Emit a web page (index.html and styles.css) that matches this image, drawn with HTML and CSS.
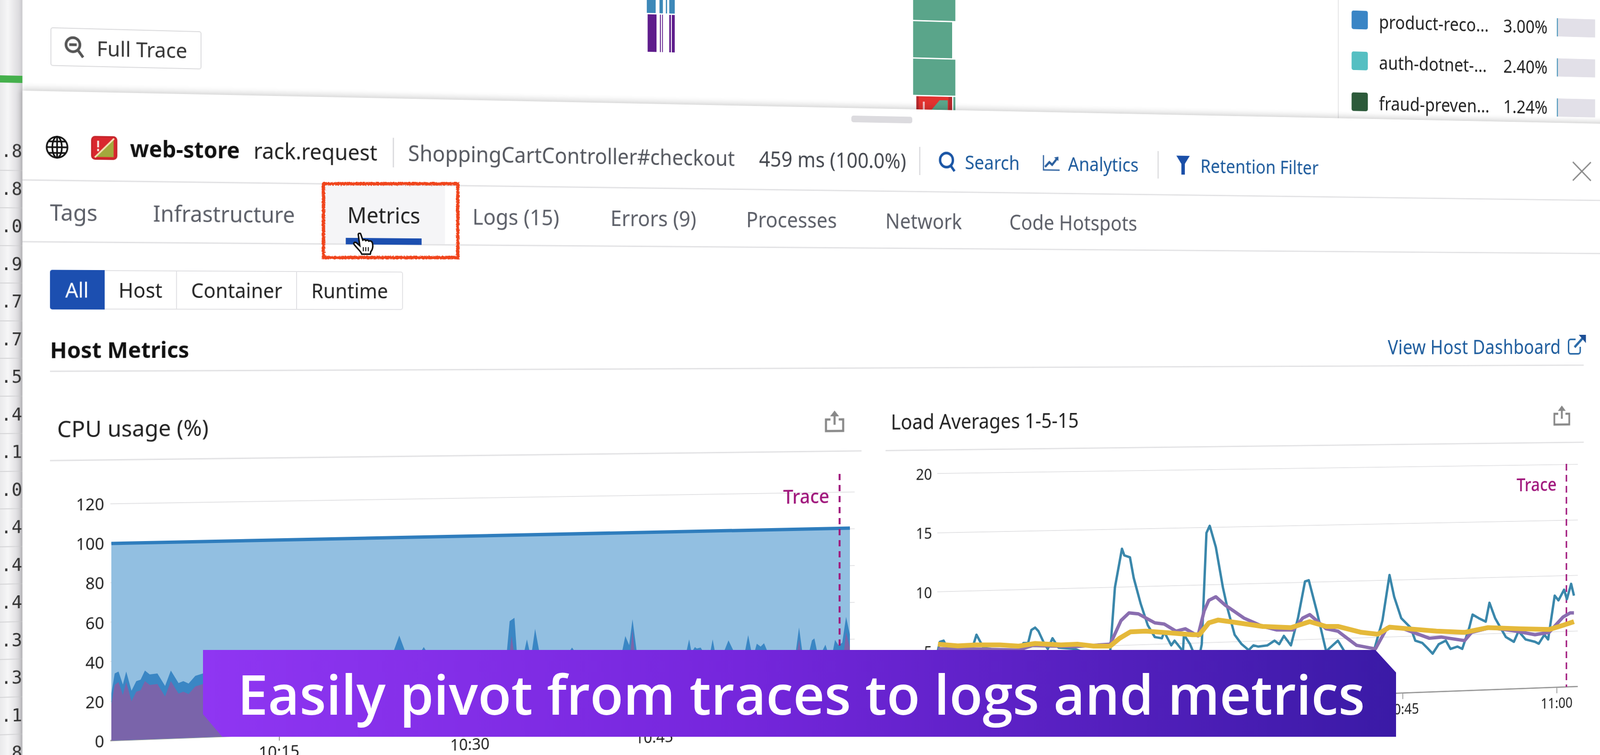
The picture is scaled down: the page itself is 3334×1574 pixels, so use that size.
FILE: index.html

```html
<!DOCTYPE html>
<html lang="en">
<head>
  <meta charset="UTF-8">
  <title>Trace panel - Metrics</title>
  <link rel="stylesheet" href="styles.css">
</head>
<body>
  <main class="stage">
    <aside class="gutter">
      <div class="gutter-bar"></div>
      <div class="gutter-row">.8</div>
      <div class="gutter-row">.8</div>
      <div class="gutter-row">.0</div>
      <div class="gutter-row">.9</div>
      <div class="gutter-row">.7</div>
      <div class="gutter-row">.7</div>
      <div class="gutter-row">.5</div>
      <div class="gutter-row">.4</div>
      <div class="gutter-row">.1</div>
      <div class="gutter-row">.0</div>
      <div class="gutter-row">.4</div>
      <div class="gutter-row">.4</div>
      <div class="gutter-row">.4</div>
      <div class="gutter-row">.3</div>
      <div class="gutter-row">.3</div>
      <div class="gutter-row">.1</div>
      <div class="gutter-row">.8</div>
    </aside>

    <div class="main">
      <section class="trace">
        <button class="full-trace">
          <svg class="icon-zoom" viewBox="0 0 40 44"><circle cx="17" cy="17" r="13" fill="none" stroke="#555" stroke-width="5"/><path d="M10 17h14M27 28l9 12" stroke="#555" stroke-width="5" fill="none"/></svg>
          Full Trace
        </button>
        <svg class="flame" viewBox="0 0 70 193">
          <g fill="#3d88b8"><rect x="0" width="21" height="107"/><rect x="30" width="8" height="107"/><rect x="53" width="13" height="107"/><rect x="45" width="3" height="107"/></g>
          <g fill="#5f1d8c"><rect x="2" y="110" width="21" height="83"/><rect x="31" y="110" width="2" height="83"/><rect x="36" y="110" width="2" height="83"/><rect x="53" y="110" width="4" height="83"/><rect x="59" y="110" width="7" height="83"/></g>
        </svg>
        <div class="green-stack">
          <div class="green-block green-a"></div>
          <div class="green-block green-b"></div>
          <div class="green-block green-c"></div>
          <div class="red-row">
            <svg class="red-block" viewBox="0 0 89 30"><rect width="89" height="30" fill="#e2322f"/><rect x="16" y="12" width="5" height="18" fill="#f3b9bd"/><path d="M38 30 58 8h20v22z" fill="#5aa58a"/><path d="M0 0h6v30H0zM80 0h9v30h-9z" fill="#b5282c"/></svg>
            <div class="red-strip"></div>
          </div>
        </div>
        <div class="services">
          <div class="service">
            <span class="swatch swatch-blue"></span>
            <span class="service-name">product-reco...</span>
            <span class="service-pct">3.00%</span>
            <span class="service-bar"></span>
          </div>
          <div class="service">
            <span class="swatch swatch-teal"></span>
            <span class="service-name">auth-dotnet-...</span>
            <span class="service-pct">2.40%</span>
            <span class="service-bar"></span>
          </div>
          <div class="service">
            <span class="swatch swatch-green"></span>
            <span class="service-name">fraud-preven...</span>
            <span class="service-pct">1.24%</span>
            <span class="service-bar"></span>
          </div>
        </div>
      </section>

      <section class="panel">
        <div class="handle"></div>

        <header class="span-header">
          <svg class="icon-globe" viewBox="0 0 52 50" fill="none" stroke="#111" stroke-width="3.5"><circle cx="26" cy="25" r="22"/><ellipse cx="26" cy="25" rx="10" ry="22"/><path d="M26 3v44M4 25h44M8 13h36M8 37h36"/></svg>
          <svg class="icon-service" viewBox="0 0 56 50"><rect x="1.5" y="1.5" width="53" height="47" rx="7" fill="#d9272e" stroke="#c4242a" stroke-width="3"/><path d="M48 6v38H9z" fill="#a3a83c"/><path d="M49 5 8 45" stroke="#f3e2b4" stroke-width="3.5"/><path d="M13 10h4v14h-4zM13 27h4v5h-4z" fill="#f8e6e0"/></svg>
          <strong class="service-title">web-store</strong>
          <span class="operation">rack.request</span>
          <span class="divider divider-a"></span>
          <span class="resource">ShoppingCartController#checkout</span>
          <span class="duration">459 ms (100.0%)</span>
          <span class="divider divider-b"></span>
          <svg class="icon-search" viewBox="0 0 46 48" fill="none" stroke="#1a55a5" stroke-width="6"><circle cx="21" cy="21" r="16"/><path d="M31 33l10 13"/></svg>
          <a class="link link-search">Search</a>
          <svg class="icon-analytics" viewBox="0 0 44 38" fill="none" stroke="#2a5f9e"><path d="M2 1v34h41" stroke-width="3"/><path d="M6 28l11-11 7 6 12-14" stroke-width="5"/><path d="M29 6l11-2v10z" fill="#2a5f9e" stroke="none"/></svg>
          <a class="link link-analytics">Analytics</a>
          <span class="divider divider-c"></span>
          <svg class="icon-filter" viewBox="0 0 35 44"><path d="M0 0h35L22 19v25h-9V19z" fill="#1a4fa8"/></svg>
          <a class="link link-retention">Retention Filter</a>
          <svg class="icon-close" viewBox="0 0 55 49" fill="none" stroke="#8b8b8b" stroke-width="3.5"><path d="M2 2l51 45M53 2 2 47"/></svg>
        </header>

        <nav class="tabs">
          <a class="tab">Tags</a>
          <a class="tab tab-infra">Infrastructure</a>
          <a class="tab tab-active"><span class="tab-label">Metrics</span><i class="tab-bar"></i></a>
          <a class="tab">Logs (15)</a>
          <a class="tab">Errors (9)</a>
          <a class="tab">Processes</a>
          <a class="tab">Network</a>
          <a class="tab">Code Hotspots</a>
        </nav>

        <div class="panel-body">
          <div class="filter">
            <button class="filter-btn filter-all">All</button>
            <button class="filter-btn filter-host">Host</button>
            <button class="filter-btn filter-container">Container</button>
            <button class="filter-btn filter-runtime">Runtime</button>
          </div>

          <div class="section-head">
            <h2>Host Metrics</h2>
            <a class="dashboard-link">View Host Dashboard
              <svg class="icon-external" viewBox="0 0 52 50" fill="none" stroke="#2a6aa8" stroke-width="4"><path d="M36 30v11a6 6 0 0 1-6 6H9a6 6 0 0 1-6-6V18a6 6 0 0 1 6-6h14"/><path d="M20 31 44 8" stroke-width="6"/><path d="M32 1h20v20z" fill="#1d4f96" stroke="none"/></svg>
            </a>
          </div>

          <div class="charts">
            <article class="chart chart-cpu">
              <div class="chart-title">
                <h3>CPU usage (%)</h3>
                <svg class="icon-share" viewBox="0 0 48 49" fill="none" stroke="#888" stroke-width="5"><path d="M14 20H3v26h42V20H34"/><path d="M24 32V6"/><path d="M24 0l11 13H13z" fill="#888" stroke="none"/></svg>
              </div>
              <div class="trace-label">Trace</div>
              <div class="y-rows">
                <div class="y-row"><span class="y-label">120</span><i class="grid-line"></i></div>
                <div class="y-row"><span class="y-label">100</span><i class="grid-line"></i></div>
                <div class="y-row"><span class="y-label">80</span><i class="grid-line"></i></div>
                <div class="y-row"><span class="y-label">60</span><i class="grid-line"></i></div>
                <div class="y-row"><span class="y-label">40</span><i class="grid-line"></i></div>
                <div class="y-row"><span class="y-label">20</span><i class="grid-line"></i></div>
                <div class="y-row"><span class="y-label">0</span><i class="grid-line grid-axis"></i></div>
              </div>
              <div class="x-axis">
                <span class="x-tick">10:15</span>
                <span class="x-tick">10:30</span>
                <span class="x-tick">10:45</span>
              </div>
            </article>

            <article class="chart chart-load">
              <div class="chart-title">
                <h3>Load Averages 1-5-15</h3>
                <svg class="icon-share" viewBox="0 0 48 49" fill="none" stroke="#888" stroke-width="5"><path d="M14 20H3v26h42V20H34"/><path d="M24 32V6"/><path d="M24 0l11 13H13z" fill="#888" stroke="none"/></svg>
              </div>
              <div class="trace-label">Trace</div>
              <div class="y-rows">
                <div class="y-row"><span class="y-label">20</span><i class="grid-line"></i></div>
                <div class="y-row"><span class="y-label">15</span><i class="grid-line"></i></div>
                <div class="y-row"><span class="y-label">10</span><i class="grid-line"></i></div>
                <div class="y-row"><span class="y-label">5</span><i class="grid-line"></i></div>
                <div class="y-row"><span class="y-label"></span><i class="grid-line grid-axis"></i></div>
              </div>
              <div class="x-axis">
                <span class="x-tick">10:15</span>
                <span class="x-tick">10:30</span>
                <span class="x-tick">10:45</span>
                <span class="x-tick">11:00</span>
              </div>
            </article>
          </div>
        </div>
      </section>
    </div>
  </main>

  <!-- series are drawn over the tilted page, in screen pixels -->
  <svg class="series" viewBox="0 0 3334 1574">
    <polygon fill="#92bfe1" points="232,1133 1771,1101 1771,1487 232,1544"/>
    <polygon fill="#3a86c4" points="232,1446 239,1404 247,1400 256,1427 263,1400 274,1440 284,1420 293,1417 302,1398 312,1406 328,1404 344,1430 356,1398 372,1424 382,1420 393,1425 407,1409 423,1404 800,1360 820,1358 832,1325 845,1360 876,1360 883,1349 890,1360 1056,1360 1062,1295 1072,1288 1077,1360 1092,1360 1098,1333 1104,1360 1108,1360 1115,1311 1124,1360 1185,1360 1192,1350 1199,1360 1296,1360 1303,1326 1311,1345 1318,1291 1327,1360 1430,1360 1436,1333 1441,1360 1448,1349 1452,1352 1460,1350 1466,1360 1480,1360 1485,1333 1490,1360 1508,1360 1518,1335 1530,1360 1552,1360 1559,1324 1566,1360 1572,1360 1577,1342 1585,1348 1592,1341 1600,1360 1658,1360 1665,1308 1672,1360 1686,1360 1692,1335 1697,1331 1703,1360 1712,1360 1720,1344 1725,1360 1735,1360 1740,1334 1747,1345 1755,1340 1763,1286 1771,1323 1771,1487 232,1544"/>
    <polygon fill="#7a64aa" points="232,1468 239,1428 247,1422 256,1449 263,1422 274,1462 284,1442 293,1439 302,1420 312,1428 328,1426 344,1452 356,1420 372,1446 382,1442 393,1447 407,1431 423,1426 800,1380 1060,1380 1066,1326 1074,1380 1312,1380 1318,1313 1324,1380 1658,1380 1665,1333 1672,1380 1756,1380 1763,1318 1771,1350 1771,1487 232,1544"/>
    <path d="M232 1133 1771 1101" stroke="#2f7dbd" stroke-width="7" fill="none"/>
    <path class="dash" d="M1749.5 988V1360" stroke-width="4" stroke-dasharray="13 10"/>
    <path class="dash" d="M3264 967V1432" stroke-width="3" stroke-dasharray="14 9"/>
    <g transform="translate(1800 800) scale(.978 .4936)" fill="none" stroke-linejoin="round">
      <polyline class="line line-blue" points="158,1125 162,1090 170,1085 180,1125 190,1120 215,1145 230,1125 240,1060 255,1115 270,1120 285,1130 310,1130 335,1125 340,1095 350,1095 357,1040 365,1030 372,1045 385,1100 392,1120 402,1075 415,1115 450,1120 480,1145 525,1130 535,860 550,697 555,725 567,733 575,820 590,930 605,1020 620,1070 635,1075 640,1048 655,1105 662,1085 680,1130 682,1060 695,1100 712,1180 720,1100 730,630 737,600 750,690 765,860 775,950 790,1060 805,1100 820,1125 830,1105 840,1110 860,1105 875,1085 885,1100 895,1065 910,1105 925,990 940,835 948,830 965,960 985,1130 1010,1085 1030,1150 1085,1140 1105,1000 1120,808 1130,900 1145,990 1165,1030 1175,1085 1190,1095 1200,1115 1212,1140 1225,1100 1240,1085 1250,1120 1265,1110 1275,1120 1290,1030 1297,975 1310,990 1325,1005 1333,925 1345,990 1368,1070 1385,1090 1395,1045 1410,1080 1430,1090 1438,1098 1450,1060 1458,1080 1472,895 1480,915 1492,870 1498,910 1507,845 1513,895"/>
      <polyline class="line line-purple" points="158,1120 230,1120 330,1125 360,1105 450,1110 525,1100 548,1000 565,968 585,972 620,1010 640,1015 665,1045 685,1035 712,1065 725,960 735,915 750,900 770,935 810,990 850,1025 880,1040 905,1040 915,1040 935,990 950,975 985,1035 1010,1045 1050,1105 1090,1120 1115,1030 1150,1035 1205,1075 1230,1070 1280,1085 1295,1050 1335,1030 1390,1045 1430,1060 1460,1050 1490,985 1505,968 1513,968"/>
      <polyline class="line line-yellow" points="158,1100 200,1107 240,1103 290,1103 330,1108 365,1097 420,1103 455,1100 490,1108 525,1108 545,1075 568,1048 600,1045 650,1052 700,1060 715,1060 735,1010 755,998 780,1005 850,1025 910,1030 950,1005 985,1025 1010,1025 1060,1050 1095,1058 1120,1028 1160,1035 1220,1045 1280,1050 1330,1030 1400,1035 1460,1038 1490,1020 1513,1005"/>
    </g>
  </svg>

  <svg class="callout" viewBox="0 0 288 162">
    <filter id="rough" x="-5%" y="-5%" width="110%" height="110%">
      <feTurbulence type="fractalNoise" baseFrequency=".35" numOctaves="2" seed="4"/>
      <feDisplacementMap in="SourceGraphic" scale="5"/>
    </filter>
    <rect x="4" y="4" width="280" height="154" fill="none" stroke="#f0441f" stroke-width="7" filter="url(#rough)"/>
  </svg>
  <svg class="cursor" viewBox="0 0 42 45"><path d="M11 4C11 1 15 0 16 3L20 15C23 13 25 14 26 16 29 14 31 15 32 17 35 16 38 17 39 20 41 27 40 33 36 38L35 43H18C16 37 10 33 3 24 1 21 3 18 7 20L14 26Z" fill="#fff" stroke="#111" stroke-width="3"/><path d="M21 29v8M26 29v8M31 29v8" stroke="#111" stroke-width="2"/></svg>

  <div class="banner">Easily pivot from traces to logs and metrics</div>
</body>
</html>
```

FILE: styles.css

```css
* { box-sizing: border-box; }

html, body { margin: 0; width: 3334px; height: 1574px; overflow: hidden; background: #fff; }
body { position: relative; font-family: "Noto Sans", "Open Sans", sans-serif; color: #222; }

h2, h3 { margin: 0; }
button { font-family: inherit; }

/* the whole page is filmed at an angle, a little out of focus */
.stage {
  display: flex;
  width: 3960px;
  height: 1842px;
  margin-top: -120px;
  transform-origin: 0 800px;
  transform: perspective(2000px) rotateY(4.87deg);
  filter: blur(.7px);
}

.gutter {
  width: 47px;
  flex: none;
  padding-top: 277px;
  overflow: hidden;
  background: linear-gradient(90deg, #e9e9eb, #f6f6f7 35%, #dcdbde 85%, #c9c8cc);
}
.gutter-bar { height: 15px; margin-bottom: 105px; background: #45b04c; }
.gutter-row {
  height: 78.5px;
  padding-left: 2px;
  border-bottom: 2px solid #d6d6d8;
  font: 37px/76px "DejaVu Sans Mono", monospace;
  color: #333;
  white-space: nowrap;
}

.main { flex: 1; display: flex; flex-direction: column; min-width: 0; }

/* trace view behind the panel */
.trace { display: flex; height: 308px; padding-left: 59px; overflow: hidden; flex: none; }
.full-trace {
  display: flex;
  align-items: center;
  gap: 24px;
  width: 323px;
  height: 81px;
  margin-top: 174px;
  padding: 0 0 0 26px;
  flex: none;
  background: #fff;
  border: 2px solid #dcdcde;
  border-radius: 5px;
  font-size: 44px;
  color: #333;
}
.icon-zoom { width: 46px; height: 50px; flex: none; }
.flame { width: 70px; height: 193px; margin-left: 1006px; flex: none; }
.green-stack { width: 105px; margin-left: 573px; flex: none; display: flex; flex-direction: column; gap: 3px; }
.green-block { background: #5aa58a; }
.green-a { height: 108px; width: 105px; }
.green-b { height: 84px; width: 97px; }
.green-c { height: 84px; width: 105px; }
.red-row { display: flex; margin-left: 8px; gap: 3px; height: 30px; }
.red-block { width: 89px; height: 30px; }
.red-strip { width: 5px; background: #5aa58a; }

.services { width: 785px; margin-left: 992px; padding: 53px 0 0 35px; border-left: 2px solid #dddde0; flex: none; }
.service { display: flex; height: 97px; align-items: flex-start; font-size: 44px; color: #222; }
.swatch { width: 44px; height: 44px; margin-top: -1px; border-radius: 5px; flex: none; }
.swatch-blue { background: #3a85c5; }
.swatch-teal { background: #55bfc2; }
.swatch-green { background: #2c5a3a; }
.service-name { width: 342px; margin-left: 30px; line-height: 46px; white-space: nowrap; }
.service-pct { width: 116px; text-align: right; line-height: 46px; }
.service-bar { width: 108px; height: 44px; margin: 2px 0 0 34px; background: #e2e0e8; border-left: 3px solid #5a9fc0; }

/* span panel */
.panel {
  position: relative;
  flex: 1;
  background: #fff;
  box-shadow: 0 -7px 11px rgba(0, 0, 0, .13), -8px 0 8px rgba(0, 0, 0, .06);
}
.handle { width: 150px; height: 15px; margin: 17px 0 0 1879px; background: #dcdbdf; border-radius: 5px; }

.span-header {
  display: flex;
  align-items: center;
  height: 156px;
  padding: 16px 84px 0 47px;
  border-bottom: 3px solid #e3e3e5;
  font-size: 47px;
  white-space: nowrap;
}
.icon-globe { width: 52px; height: 50px; flex: none; }
.icon-service { width: 56px; height: 50px; margin-left: 46px; flex: none; }
.service-title { margin-left: 27px; font-weight: 700; color: #111; font-size: 47.6px; }
.operation { margin-left: 30px; color: #222; }
.divider { width: 3px; height: 64px; background: #dcdcdf; flex: none; }
.divider-a { margin-left: 34px; }
.divider-b { margin-left: 32px; }
.divider-c { margin-left: 49px; }
.resource { margin-left: 32px; color: #55585f; font-size: 47.2px; }
.duration { margin-left: 58px; color: #45484f; font-size: 47px; }
.link { font-size: 43.5px; color: #1c5a9c; }
.icon-search { width: 46px; height: 48px; margin-left: 44px; flex: none; }
.link-search { margin-left: 21px; }
.icon-analytics { width: 44px; height: 38px; margin-left: 58px; flex: none; }
.link-analytics { margin-left: 21px; }
.icon-filter { width: 35px; height: 44px; margin-left: 46px; flex: none; }
.link-retention { margin-left: 28px; }
.icon-close { width: 55px; height: 49px; margin-left: auto; flex: none; }

.tabs {
  display: flex;
  gap: 5px;
  height: 129px;
  padding-left: 58px;
  border-bottom: 3px solid #e3e3e5;
  font-size: 47.2px;
  color: #5c5f68;
}
.tab { display: flex; align-items: center; padding: 4px 57px 0; white-space: nowrap; }
.tab:first-child { padding-left: 0; }
.tab-infra { padding-right: 55px; }
.tab-active { flex-direction: column; align-items: center; padding: 14px 0 0; width: 276px; background: #f5f5f7; color: #222; }
.tab-label { flex: 1; display: flex; align-items: center; }
.tab-bar { width: 170px; height: 14px; margin-bottom: -2px; background: #1c4fb0; flex: none; }

.panel-body { padding-left: 58px; }

.filter { display: flex; width: 769px; height: 83px; margin-top: 57px; }
.filter-btn {
  padding: 0;
  background: #fff;
  border: 2px solid #e1e1e4;
  border-left: 0;
  font-size: 43px;
  color: #222;
}
.filter-all { width: 116px; background: #1c4fb0; border-color: #1c4fb0; border-radius: 5px 0 0 5px; color: #fff; }
.filter-host { width: 155px; }
.filter-container { width: 262px; }
.filter-runtime { width: 236px; border-radius: 0 5px 5px 0; }

.section-head {
  display: flex;
  align-items: center;
  justify-content: space-between;
  width: 3749px;
  height: 131px;
  padding-top: 40px;
  border-bottom: 3px solid #e3e3e5;
}
.section-head h2 { font-size: 47px; font-weight: 700; color: #111; }
.dashboard-link { display: flex; align-items: center; gap: 19px; font-size: 47px; letter-spacing: .3px; color: #1d5c9d; margin-right: -6px; }
.icon-external { width: 52px; height: 50px; flex: none; margin-bottom: 8px; }

.charts { display: grid; grid-template-columns: 1846px 1844px; column-gap: 59px; }
.chart { position: relative; }
.chart-title {
  display: flex;
  align-items: center;
  justify-content: space-between;
  height: 187px;
  padding: 56px 38px 0 13px;
  border-bottom: 3px solid #e3e3e5;
}
.chart-title h3 { font-size: 46.8px; font-weight: 400; color: #222; }
.chart-cpu h3 { font-size: 48px; }
.chart-cpu .chart-title { padding: 52px 42px 0 15px; }
.icon-share { width: 48px; height: 49px; flex: none; }

.trace-label { position: absolute; left: 1655px; top: 262px; font-size: 44px; font-weight: 500; line-height: 46px; color: #a0177c; }

.y-row { display: flex; align-items: center; gap: 13px; padding-right: 17px; height: 83.2px; }
.y-label { width: 115px; text-align: right; font-size: 35px; color: #222; flex: none; }
.grid-line { flex: 1; height: 2px; background: #e4e4e6; }
.grid-axis { background: #999; height: 3px; }
.chart-cpu .y-rows { margin-top: 49px; }
.chart-load .y-rows { margin-top: -15px; }
.chart-load .y-row { height: 134.5px; }

.x-axis { display: flex; font-size: 35px; line-height: 46px; color: #222; }
.x-tick { width: 427px; flex: none; text-align: center; }
.x-tick::before { content: ""; display: block; width: 2px; height: 14px; margin: 0 auto; background: #999; }
.chart-cpu .x-axis { margin: -42px 0 0 280px; }
.chart-load .x-axis { margin: -67px 0 0 273px; }

/* things on top of the filmed page */
.series { position: absolute; left: 0; top: 0; width: 3334px; height: 1574px; }
.dash { stroke: #a0177c; fill: none; }
.line { fill: none; stroke-linejoin: round; vector-effect: non-scaling-stroke; }
.line-blue { stroke: #3a87ab; stroke-width: 5px; }
.line-purple { stroke: #8a6eb0; stroke-width: 7px; }
.line-yellow { stroke: #e5b93a; stroke-width: 10px; }

.callout { position: absolute; left: 670px; top: 379px; width: 288px; height: 162px; }
.cursor { position: absolute; left: 735px; top: 485px; width: 44px; height: 47px; }

.banner {
  position: absolute;
  left: 423px;
  top: 1355px;
  display: flex;
  align-items: center;
  width: 2486px;
  height: 181px;
  padding-left: 72px;
  background: linear-gradient(90deg, #8f36f2, #7526dc 45%, #3a1aa6);
  clip-path: polygon(0 0, 2443px 0, 100% 47px, 100% 100%, 40px 100%, 0 134px);
  font-family: "Open Sans", sans-serif;
  font-size: 113.5px;
  font-weight: 600;
  color: #fff;
  white-space: nowrap;
}
```
